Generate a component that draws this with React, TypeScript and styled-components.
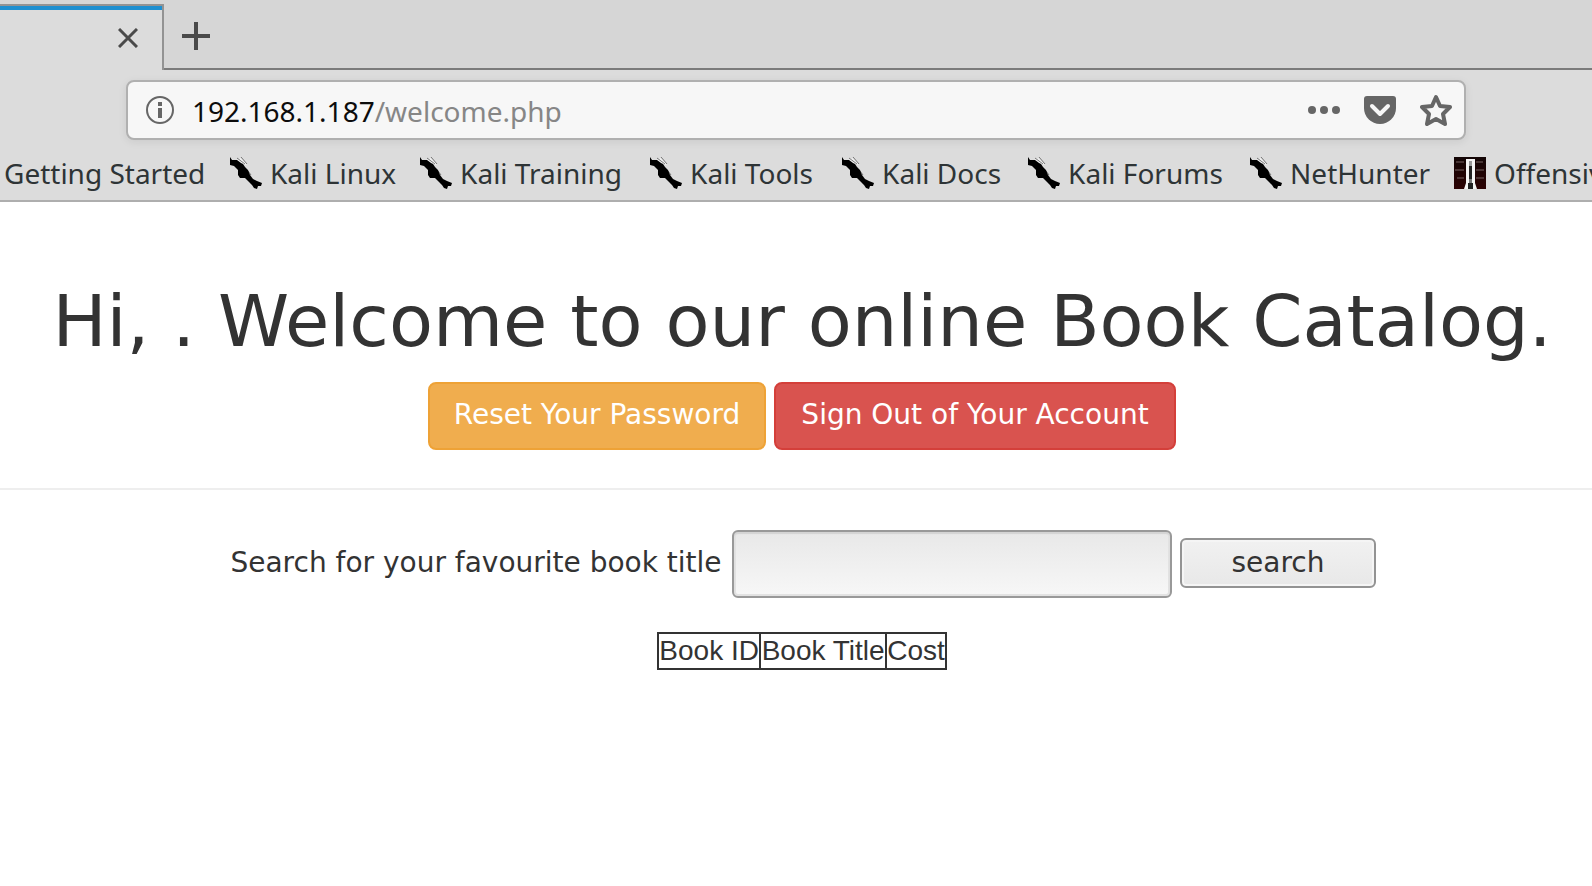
import React from 'react';
import styled, { createGlobalStyle } from 'styled-components';

const GlobalStyle = createGlobalStyle`
  * { box-sizing: border-box; }
  body { margin: 0; background: #fff; overflow-x: hidden; }
  button, input { font: inherit; }
`;

const uiFont = '"Noto Sans", "Open Sans", sans-serif';
const pageFont = '"DejaVu Sans", sans-serif';

const Chrome = styled.header`
  background: #dcdcdc;
  border-bottom: 2px solid #aeaeae;
  font-family: ${uiFont};
  color: #2e3436;
  overflow: hidden;
`;

const TabStrip = styled.div`
  display: flex;
  height: 70px;
  padding-top: 4px;
  background: #d6d6d6;
`;

const Tab = styled.div`
  display: flex;
  align-items: center;
  justify-content: flex-end;
  width: 164px;
  padding-right: 24px;
  background: #dcdcdc;
  border-top: 2px solid #939393;
  border-right: 2px solid #939393;
  box-shadow: inset 0 4px #1e8fd0;
`;

const StripRest = styled.div`
  flex: 1;
  padding: 16px 16px;
  border-bottom: 2px solid #7b7b7b;
`;

const IconButton = styled.button`
  display: block;
  padding: 0;
  border: 0;
  background: none;
  line-height: 0;
`;

const Toolbar = styled.div`
  padding: 10px 126px 0;
`;

const UrlBar = styled.div`
  display: flex;
  align-items: center;
  height: 60px;
  padding: 0 12px 0 18px;
  background: #f7f7f7;
  border: 2px solid #b0b0b0;
  border-radius: 8px;
  box-shadow: 0 2px 8px rgba(0, 0, 0, 0.08);
`;

const Address = styled.div`
  flex: 1;
  margin-left: 18px;
  padding-top: 2px;
  font-size: 28px;
  line-height: 40px;
  color: #0c0c0c;
  white-space: nowrap;
  outline: 0;
`;

const UrlPath = styled.span`
  color: #868686;
`;

const UrlActions = styled.div`
  display: flex;
  align-items: center;
  gap: 24px;
`;

const Bookmarks = styled.nav`
  display: flex;
  align-items: center;
  gap: 24px;
  height: 60px;
  padding: 6px 0 0 4px;
  white-space: nowrap;
`;

const Bookmark = styled.a<{ $width?: number }>`
  display: flex;
  flex: none;
  align-items: center;
  gap: 8px;
  min-width: ${p => (p.$width ? `${p.$width}px` : 'auto')};
  color: inherit;
  font-size: 28px;
  line-height: 40px;
  text-decoration: none;
`;

const Page = styled.main`
  padding-left: 12px;
  font-family: ${pageFont};
  font-size: 28px;
  line-height: 38px;
  color: #333;
  text-align: center;
`;

const PageHeader = styled.div`
  margin-left: -12px;
  padding: 80px 0 38px 12px;
  border-bottom: 2px solid #eee;
`;

const Title = styled.h1`
  margin: 0 0 22px;
  font-size: 72px;
  font-weight: 500;
  line-height: 78px;
  white-space: nowrap;
`;

const Actions = styled.div`
  display: flex;
  justify-content: center;
  gap: 8px;
`;

const ActionLink = styled.a<{ $bg: string; $edge: string; $width: number }>`
  min-width: ${p => p.$width}px;
  padding: 12px 20px 14px;
  border: 2px solid ${p => p.$edge};
  border-radius: 8px;
  background: ${p => p.$bg};
  color: #fff;
  text-decoration: none;
`;

const SearchForm = styled.form`
  display: flex;
  align-items: center;
  justify-content: center;
  gap: 8px;
  margin: 40px 0 34px;
`;

const SearchLabel = styled.label`
  min-width: 496px;
  margin-bottom: 2px;
`;

const SearchInput = styled.input`
  width: 440px;
  height: 68px;
  padding: 0 12px;
  border: 2px solid #999;
  border-radius: 6px;
  background: linear-gradient(#e8e8e8, #f7f7f7);
  box-shadow: inset 0 2px 1px #d4d4d4, inset 0 0 0 2px #e2e2e2;
`;

const SearchButton = styled.button`
  width: 196px;
  height: 50px;
  margin: 0 0 2px;
  padding: 0;
  border: 2px solid #939393;
  border-radius: 6px;
  background: linear-gradient(#f1f1f1, #e8e8e8);
  box-shadow: inset 0 0 0 2px #f5f5f5;
  color: #333;
`;

const BookTable = styled.table`
  width: 290px;
  margin: 0 auto;
  border-collapse: collapse;
  font-family: "Liberation Sans", Arial, sans-serif;
`;

const Heading = styled.th`
  padding: 0;
  border: 2px solid #333;
  font-weight: 400;
  line-height: 34px;
  white-space: nowrap;
`;

const KaliIcon = () => (
  <svg width="32" height="32" viewBox="0 0 32 32" aria-hidden="true">
    <path d="m6 3 5-2 6 7-4-1z" fill="#f0f0f0" />
    <path d="m7 1 8 6M11 0l6 7M18 14l3 4" fill="none" stroke="#777" />
    <path d="M0 0 2 3H7L11 6 13 7 15 10 18 13 20 18 23 22 27 24 32 26 31 29 28 29 27 32 24 31 22 28 19 25 15 21 10 21 8 18 8 13 4 9 0 8Z" fill="#000" />
  </svg>
);

const OffsecIcon = () => (
  <svg width="32" height="32" viewBox="0 0 32 32" aria-hidden="true">
    <defs>
      <linearGradient id="curtain" x1="0" y1="0" x2="0" y2="1">
        <stop offset="0" stopColor="#120505" />
        <stop offset="1" stopColor="#2c0203" />
      </linearGradient>
    </defs>
    <path d="M0 0h32v32H0z" fill="url(#curtain)" />
    <path d="M2 5h8M1 13h9M3 21h7M22 5h7M22 13h8M22 21h8" stroke="#5c4848" strokeWidth="2" opacity=".7" />
    <path d="M12 2h9v24l2 6H10l2-6z" fill="#f4f4f4" />
    <path d="M15 4h3v5h-3z" fill="#999" />
    <path d="M15 9h3v17h1v6h-5v-6h1z" fill="#222" />
    <path d="M15 22h3v4h-3z" fill="#777" />
  </svg>
);

const kaliLinks = [
  { name: 'Kali Linux', width: 166 },
  { name: 'Kali Training', width: 206 },
  { name: 'Kali Tools', width: 168 },
  { name: 'Kali Docs', width: 162 },
  { name: 'Kali Forums', width: 198 },
  { name: 'NetHunter', width: 180 },
];

export default function App() {
  return (
    <>
      <GlobalStyle />
      <Chrome>
        <TabStrip>
          <Tab>
            <IconButton aria-label="Close tab">
              <svg width="20" height="20" viewBox="0 0 20 20"><path d="M1 1 19 19M19 1 1 19" stroke="#4a4a4a" strokeWidth="3" /></svg>
            </IconButton>
          </Tab>
          <StripRest>
            <IconButton aria-label="New tab">
              <svg width="32" height="32" viewBox="0 0 32 32"><path d="M16 2v28M2 16h28" stroke="#4a4a4a" strokeWidth="4" /></svg>
            </IconButton>
          </StripRest>
        </TabStrip>
        <Toolbar>
          <UrlBar>
            <IconButton aria-label="Site information">
              <svg width="28" height="28" viewBox="0 0 28 28">
                <circle cx="14" cy="14" r="13" fill="none" stroke="#666" strokeWidth="2" />
                <path d="M12 6h4v4h-4zM12 12h4v10h-4z" fill="#666" />
              </svg>
            </IconButton>
            <Address role="textbox" aria-label="Address" contentEditable suppressContentEditableWarning spellCheck={false}>
              192.168.1.187<UrlPath>/welcome.php</UrlPath>
            </Address>
            <UrlActions>
              <IconButton aria-label="Page actions">
                <svg width="32" height="32" viewBox="0 0 32 32" fill="#666"><circle cx="4" cy="16" r="4" /><circle cx="16" cy="16" r="4" /><circle cx="28" cy="16" r="4" /></svg>
              </IconButton>
              <IconButton aria-label="Save to Pocket">
                <svg width="32" height="32" viewBox="0 0 32 32">
                  <path d="M3 2h26q3 0 3 3v9a16 16 0 0 1-32 0V5q0-3 3-3z" fill="#666" />
                  <path d="m8 12 8 8 8-8" fill="none" stroke="#f7f7f7" strokeWidth="4" strokeLinecap="round" strokeLinejoin="round" />
                </svg>
              </IconButton>
              <IconButton aria-label="Bookmark this page">
                <svg width="32" height="32" viewBox="0 0 32 32"><path d="m16 3 4 9 10 1-7 7 2 10-9-5-9 5 2-10-7-7 10-1z" fill="none" stroke="#666" strokeWidth="4" strokeLinejoin="round" /></svg>
              </IconButton>
            </UrlActions>
          </UrlBar>
        </Toolbar>
        <Bookmarks>
          <Bookmark href="#" $width={202}>Getting Started</Bookmark>
          {kaliLinks.map(link => (
            <Bookmark key={link.name} href="#" $width={link.width}><KaliIcon />{link.name}</Bookmark>
          ))}
          <Bookmark href="#"><OffsecIcon />Offensive Security</Bookmark>
        </Bookmarks>
      </Chrome>
      <Page>
        <PageHeader>
          <Title>Hi, . Welcome to our online Book Catalog.</Title>
          <Actions>
            <ActionLink href="#" $bg="#f0ad4e" $edge="#eea236" $width={338}>Reset Your Password</ActionLink>
            <ActionLink href="#" $bg="#d9534f" $edge="#d43f3a" $width={402}>Sign Out of Your Account</ActionLink>
          </Actions>
        </PageHeader>
        <SearchForm onSubmit={e => e.preventDefault()}>
          <SearchLabel htmlFor="title">Search for your favourite book title</SearchLabel>
          <SearchInput id="title" type="text" />
          <SearchButton type="submit">search</SearchButton>
        </SearchForm>
        <BookTable>
          <thead>
            <tr><Heading>Book ID</Heading><Heading>Book Title</Heading><Heading>Cost</Heading></tr>
          </thead>
        </BookTable>
      </Page>
    </>
  );
}
